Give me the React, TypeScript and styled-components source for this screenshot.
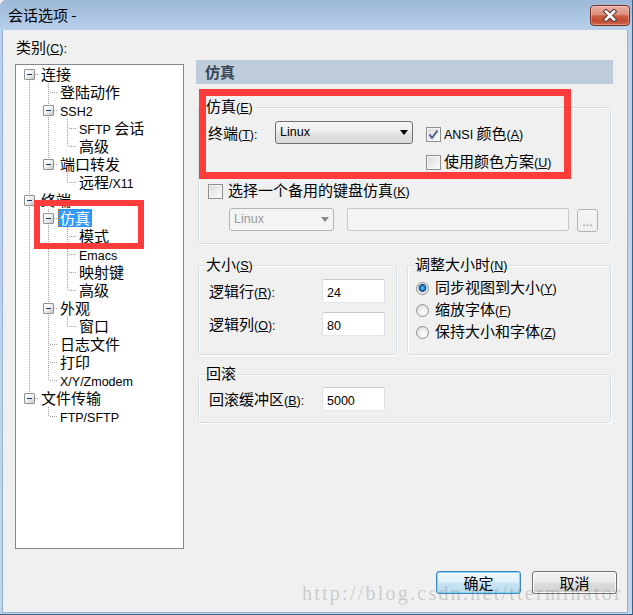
import React from "react";
import styled, { createGlobalStyle, css } from "styled-components";

const GlobalStyle = createGlobalStyle`
  html, body { margin: 0; padding: 0; background: #f0f0f0; }
  body {
    font-family: "Noto Sans CJK SC", "Noto Sans", sans-serif;
    font-size: 15px;
    color: #000;
  }
  *, *::before, *::after { box-sizing: border-box; }
`;

const Latin = styled.span`
  font-family: "Liberation Sans", Arial, sans-serif;
  font-size: 12.5px;
  u { text-decoration-thickness: 1px; text-underline-offset: 1px; }
`;

const Key: React.FC<{ k: string; colon?: boolean }> = ({ k, colon }) => (
  <Latin>
    (<u>{k}</u>){colon ? ":" : ""}
  </Latin>
);

/* ---------- window chrome ---------- */

const Window = styled.div`
  position: relative;
  width: 633px;
  height: 615px;
  display: flex;
  flex-direction: column;
  background: linear-gradient(to bottom, #9cb7d7 0px, #b9d1eb 30px, #bfd6ee 100%);
  box-shadow: inset -1px -1px 0 #3a6186;
  border-top-left-radius: 6px;
  overflow: hidden;
`;

const TitleBar = styled.div`
  flex: none;
  height: 30px;
  display: flex;
  align-items: center;
  justify-content: space-between;
  padding: 0 3px 0 8px;
`;

const TitleText = styled.div`
  line-height: 18px;
  color: #000;
`;

const CloseButton = styled.div`
  width: 40px;
  height: 21px;
  border-radius: 4px;
  border: 1px solid #7a2d22;
  background: linear-gradient(
    to bottom,
    #eab0a3 0%,
    #dc8f7c 45%,
    #c95c45 52%,
    #c24a31 80%,
    #d06a4f 100%
  );
  box-shadow: inset 0 0 0 1px rgba(255, 255, 255, 0.3);
  display: flex;
  align-items: center;
  justify-content: center;
`;

const Client = styled.div`
  flex: 1;
  margin: 0 5px 2px 2px;
  border: 1px solid #93b2d4;
  border-top: none;
  background: #f0f0f0;
  display: flex;
  flex-direction: column;
`;

const Main = styled.div`
  flex: 1;
  display: flex;
  gap: 12px;
  padding: 8px 0 0 12px;
`;

/* ---------- left: category tree ---------- */

const LeftCol = styled.div`
  width: 169px;
  display: flex;
  flex-direction: column;
`;

const CategoryLabel = styled.div`
  height: 18px;
  line-height: 18px;
  margin-bottom: 8px;
  padding-left: 1px;
`;

const TreeBox = styled.div`
  height: 485px;
  background: #fff;
  border: 1px solid #828790;
  padding: 0 0 0 4px;
`;

const TreeRow = styled.div`
  display: flex;
  height: 18px;
  line-height: 18px;
  white-space: nowrap;
`;

const dotsV = "repeating-linear-gradient(to bottom, #a0a0a0 0 1px, transparent 1px 2px)";
const dotsH = "repeating-linear-gradient(to right, #a0a0a0 0 1px, transparent 1px 2px)";

const Guide = styled.div<{ $line: boolean }>`
  flex: none;
  width: 19px;
  height: 18px;
  ${(p) =>
    p.$line &&
    css`
      background: ${dotsV} 9px 0 / 1px 18px no-repeat;
    `}
`;

const Connector = styled.div<{ $up: boolean; $down: boolean }>`
  flex: none;
  width: 19px;
  height: 18px;
  display: flex;
  align-items: flex-start;
  background: ${dotsH} 11px 9px / 8px 1px no-repeat
    ${(p) => (p.$up ? `, ${dotsV} 9px 0 / 1px 10px no-repeat` : "")}
    ${(p) => (p.$down ? `, ${dotsV} 9px 10px / 1px 8px no-repeat` : "")};
`;

const Expander = styled.div`
  width: 11px;
  height: 11px;
  margin: 4px 0 0 4px;
  border: 1px solid #919191;
  border-radius: 1px;
  background: linear-gradient(135deg, #ffffff 0%, #f2f2f2 45%, #c9c9c9 100%);
  display: flex;
  align-items: center;
  justify-content: center;
  &::before {
    content: "";
    width: 5px;
    height: 1px;
    background: #1e3a66;
  }
`;

const NodeLabel = styled.span<{ $selected?: boolean }>`
  height: 18px;
  line-height: 18px;
  padding: 0 2px;
  ${(p) =>
    p.$selected &&
    css`
      background: #3399ff;
      color: #fff;
      outline: 1px dotted #cc6600;
      outline-offset: -1px;
    `}
`;

type TreeNode = { label: React.ReactNode; children?: TreeNode[]; selected?: boolean };

const treeData: TreeNode[] = [
  {
    label: "连接",
    children: [
      { label: "登陆动作" },
      {
        label: <Latin>SSH2</Latin>,
        children: [
          {
            label: (
              <>
                <Latin>SFTP</Latin> 会话
              </>
            ),
          },
          { label: "高级" },
        ],
      },
      {
        label: "端口转发",
        children: [
          {
            label: (
              <>
                远程<Latin>/X11</Latin>
              </>
            ),
          },
        ],
      },
    ],
  },
  {
    label: "终端",
    children: [
      {
        label: "仿真",
        selected: true,
        children: [
          { label: "模式" },
          { label: <Latin>Emacs</Latin> },
          { label: "映射键" },
          { label: "高级" },
        ],
      },
      { label: "外观", children: [{ label: "窗口" }] },
      { label: "日志文件" },
      { label: "打印" },
      { label: <Latin>X/Y/Zmodem</Latin> },
    ],
  },
  { label: "文件传输", children: [{ label: <Latin>FTP/SFTP</Latin> }] },
];

type FlatRow = {
  node: TreeNode;
  guides: boolean[];
  hasNext: boolean;
  first: boolean;
};

function flatten(nodes: TreeNode[], depth: number, guides: boolean[], out: FlatRow[]) {
  nodes.forEach((n, i) => {
    const hasNext = i < nodes.length - 1;
    out.push({ node: n, guides, hasNext, first: depth === 0 && i === 0 });
    if (n.children) flatten(n.children, depth + 1, [...guides, hasNext], out);
  });
  return out;
}

const rows = flatten(treeData, 0, [], []);

const CategoryTree: React.FC = () => (
  <TreeBox>
    {rows.map((r, idx) => (
      <TreeRow key={idx}>
        {r.guides.map((g, gi) => (
          <Guide key={gi} $line={g} />
        ))}
        <Connector $up={!r.first} $down={r.hasNext}>
          {r.node.children && <Expander />}
        </Connector>
        <NodeLabel $selected={r.node.selected}>{r.node.label}</NodeLabel>
      </TreeRow>
    ))}
  </TreeBox>
);

/* ---------- right: options panel ---------- */

const RightCol = styled.div`
  width: 417px;
  padding-top: 22px;
  display: flex;
  flex-direction: column;
`;

const PanelHeader = styled.div`
  height: 24px;
  line-height: 24px;
  background: #bfcddb;
  color: #3a4653;
  font-weight: bold;
  padding-left: 9px;
`;

const Group = styled.div`
  position: relative;
  border: 1px solid #d5dfe5;
  border-radius: 3px;
  box-shadow: inset 1px 1px 0 #ffffff, 1px 1px 0 #ffffff;
`;

const Legend = styled.span`
  position: absolute;
  top: -11px;
  left: 6px;
  height: 18px;
  padding: 0 1px;
  background: #f0f0f0;
  line-height: 18px;
  white-space: nowrap;
`;

const EmuGroup = styled(Group)`
  margin: 23px 2px 0;
  padding: 13px 9px 11px;
`;

const TermRow = styled.div`
  display: flex;
  align-items: flex-start;
`;

const FieldLabel = styled.div<{ $w: number; $h: number }>`
  flex: none;
  width: ${(p) => p.$w}px;
  height: ${(p) => p.$h}px;
  line-height: ${(p) => p.$h}px;
  white-space: nowrap;
  overflow: visible;
`;

const Combo = styled.div<{ $w: number; $disabled?: boolean }>`
  flex: none;
  width: ${(p) => p.$w}px;
  height: 23px;
  border: 1px solid ${(p) => (p.$disabled ? "#b2b6b9" : "#707070")};
  border-radius: 3px;
  background: ${(p) =>
    p.$disabled
      ? "#f4f4f4"
      : "linear-gradient(to bottom, #f6f6f6 0%, #ededed 48%, #e2e2e2 52%, #d9d9d9 100%)"};
  color: ${(p) => (p.$disabled ? "#9a9a9a" : "#000")};
  display: flex;
  align-items: center;
  justify-content: space-between;
  padding: 0 4px;
  line-height: 21px;
`;

const Arrow = styled.span<{ $disabled?: boolean }>`
  width: 0;
  height: 0;
  border-left: 4.5px solid transparent;
  border-right: 4.5px solid transparent;
  border-top: 5px solid ${(p) => (p.$disabled ? "#8a8a8a" : "#000")};
`;

const CheckCol = styled.div`
  margin: 4px 0 0 13px;
  display: flex;
  flex-direction: column;
  gap: 10px;
`;

const CheckRow = styled.div<{ $gap: number }>`
  display: flex;
  align-items: center;
  height: 18px;
  line-height: 18px;
  gap: ${(p) => p.$gap}px;
  white-space: nowrap;
`;

const CheckBox = styled.span`
  flex: none;
  width: 15px;
  height: 15px;
  border: 1px solid #8e8f8f;
  background: linear-gradient(135deg, #d9d9d9 0%, #eeeeee 55%, #fbfbfb 100%);
  box-shadow: inset 0 0 0 1px #f6f6f6;
  display: flex;
  align-items: center;
  justify-content: center;
`;

const AltKeyRow = styled.div`
  margin-top: 11px;
`;

const AltRow = styled.div`
  margin-top: 8px;
  padding-left: 21px;
  display: flex;
  align-items: flex-start;
`;

const DisabledField = styled.div`
  flex: none;
  width: 222px;
  height: 23px;
  margin-left: 13px;
  border: 1px solid #c5c9cd;
  border-radius: 2px;
  background: #f4f4f4;
`;

const BrowseButton = styled.div`
  flex: none;
  width: 21px;
  height: 23px;
  margin: 1px 0 0 8px;
  border: 1px solid #b4b4b4;
  border-radius: 3px;
  background: linear-gradient(to bottom, #f7f7f7, #ededed);
  color: #8a8a8a;
  display: flex;
  align-items: center;
  justify-content: center;
  line-height: 21px;
  padding-top: 4px;
`;

const SizeRow = styled.div`
  display: flex;
  gap: 10px;
  margin: 21px 2px 0;
`;

const SizeGroup = styled(Group)`
  width: 199px;
  padding: 13px 10px 14px;
  display: flex;
  flex-direction: column;
  gap: 9px;
`;

const ResizeGroup = styled(Group)`
  flex: 1;
  padding: 12px 8px;
  display: flex;
  flex-direction: column;
  gap: 2px;
`;

const ScrollGroup = styled(Group)`
  margin: 19px 2px 0;
  padding: 12px 10px 11px;
`;

const InputRow = styled.div`
  display: flex;
  align-items: center;
  height: 24px;
`;

const TextBox = styled.div`
  flex: none;
  width: 63px;
  height: 24px;
  background: #fff;
  border: 1px solid;
  border-color: #c4c8ce #dce0e5 #e3e7eb #dce0e5;
  border-radius: 2px;
  padding-left: 4px;
  line-height: 22px;
`;

const RadioRow = styled.div`
  display: flex;
  align-items: center;
  height: 20px;
  line-height: 20px;
  gap: 6px;
  white-space: nowrap;
`;

const Radio = styled.span<{ $on?: boolean }>`
  flex: none;
  width: 13px;
  height: 13px;
  border-radius: 50%;
  border: 1px solid #8e8f8f;
  background: ${(p) =>
    p.$on
      ? "radial-gradient(circle at 50% 45%, #a8e0ff 0, #2b8ad6 1.6px, #0e4f90 3.6px, #e6e6e6 4.3px, #fbfbfb 100%)"
      : "radial-gradient(circle at 62% 66%, #ffffff 0, #f1f1f1 40%, #d2d2d2 100%)"};
`;

/* ---------- bottom buttons ---------- */

const ButtonBar = styled.div`
  display: flex;
  justify-content: flex-end;
  gap: 11px;
  padding: 0 10px 18px 0;
`;

const DialogButton = styled.button<{ $primary?: boolean }>`
  width: 85px;
  height: 23px;
  padding: 0;
  font: inherit;
  font-size: 15px;
  line-height: 21px;
  color: #000;
  border-radius: 3px;
  border: 1px solid ${(p) => (p.$primary ? "#3d86bd" : "#707070")};
  background: ${(p) =>
    p.$primary
      ? "linear-gradient(to bottom, #f0f8fd 0%, #dff0fa 48%, #c9e4f3 52%, #bcdcee 100%)"
      : "linear-gradient(to bottom, #f2f2f2 0%, #ebebeb 48%, #dddddd 52%, #cfcfcf 100%)"};
  box-shadow: inset 0 0 0 1px ${(p) => (p.$primary ? "#86d4f4" : "#fbfbfb")};
`;

/* ---------- overlays ---------- */

const Annotation = styled.div<{ $x: number; $y: number; $w: number; $h: number; $b: number }>`
  position: absolute;
  left: ${(p) => p.$x}px;
  top: ${(p) => p.$y}px;
  width: ${(p) => p.$w}px;
  height: ${(p) => p.$h}px;
  border: ${(p) => p.$b}px solid #ff3c3c;
  pointer-events: none;
`;

const Watermark = styled.div`
  position: absolute;
  left: 302px;
  top: 583px;
  font-family: "Liberation Serif", "Times New Roman", serif;
  font-size: 20px;
  line-height: 20px;
  letter-spacing: 2.25px;
  color: rgba(120, 120, 120, 0.32);
  white-space: nowrap;
  pointer-events: none;
`;

const CloseIcon = () => (
  <svg width="16" height="13" viewBox="0 0 16 13">
    <path d="M4 2.5 L12 10.5 M12 2.5 L4 10.5" stroke="#5a3a34" strokeWidth="4.6" strokeLinecap="square" />
    <path d="M4 2.5 L12 10.5 M12 2.5 L4 10.5" stroke="#ffffff" strokeWidth="2.6" strokeLinecap="square" />
  </svg>
);

const CheckMark = () => (
  <svg width="13" height="13" viewBox="0 0 13 13">
    <path d="M2.5 6.5 L5 10 L10.5 2.5" fill="none" stroke="#4b5f8c" strokeWidth="2" strokeLinejoin="round" />
  </svg>
);

export default function App() {
  return (
    <>
      <GlobalStyle />
      <Window>
        <TitleBar>
          <TitleText>会话选项 -</TitleText>
          <CloseButton>
            <CloseIcon />
          </CloseButton>
        </TitleBar>
        <Client>
          <Main>
            <LeftCol>
              <CategoryLabel>
                类别<Key k="C" colon />
              </CategoryLabel>
              <CategoryTree />
            </LeftCol>
            <RightCol>
              <PanelHeader>仿真</PanelHeader>

              <EmuGroup>
                <Legend>
                  仿真<Key k="E" />
                </Legend>
                <TermRow>
                  <FieldLabel $w={67} $h={23}>
                    终端<Key k="T" colon />
                  </FieldLabel>
                  <Combo $w={138}>
                    <Latin>Linux</Latin>
                    <Arrow />
                  </Combo>
                  <CheckCol>
                    <CheckRow $gap={3}>
                      <CheckBox>
                        <CheckMark />
                      </CheckBox>
                      <span>
                        <Latin>ANSI</Latin> 颜色<Key k="A" />
                      </span>
                    </CheckRow>
                    <CheckRow $gap={3}>
                      <CheckBox />
                      <span>
                        使用颜色方案<Key k="U" />
                      </span>
                    </CheckRow>
                  </CheckCol>
                </TermRow>
                <AltKeyRow>
                  <CheckRow $gap={5}>
                    <CheckBox />
                    <span>
                      选择一个备用的键盘仿真<Key k="K" />
                    </span>
                  </CheckRow>
                </AltKeyRow>
                <AltRow>
                  <Combo $w={105} $disabled>
                    <Latin>Linux</Latin>
                    <Arrow $disabled />
                  </Combo>
                  <DisabledField />
                  <BrowseButton>
                    <Latin>...</Latin>
                  </BrowseButton>
                </AltRow>
              </EmuGroup>

              <SizeRow>
                <SizeGroup>
                  <Legend>
                    大小<Key k="S" />
                  </Legend>
                  <InputRow>
                    <FieldLabel $w={113} $h={24}>
                      逻辑行<Key k="R" colon />
                    </FieldLabel>
                    <TextBox>
                      <Latin>24</Latin>
                    </TextBox>
                  </InputRow>
                  <InputRow>
                    <FieldLabel $w={113} $h={24}>
                      逻辑列<Key k="O" colon />
                    </FieldLabel>
                    <TextBox>
                      <Latin>80</Latin>
                    </TextBox>
                  </InputRow>
                </SizeGroup>
                <ResizeGroup>
                  <Legend>
                    调整大小时<Key k="N" />
                  </Legend>
                  <RadioRow>
                    <Radio $on />
                    <span>
                      同步视图到大小<Key k="Y" />
                    </span>
                  </RadioRow>
                  <RadioRow>
                    <Radio />
                    <span>
                      缩放字体<Key k="F" />
                    </span>
                  </RadioRow>
                  <RadioRow>
                    <Radio />
                    <span>
                      保持大小和字体<Key k="Z" />
                    </span>
                  </RadioRow>
                </ResizeGroup>
              </SizeRow>

              <ScrollGroup>
                <Legend>回滚</Legend>
                <InputRow>
                  <FieldLabel $w={113} $h={24}>
                    回滚缓冲区<Key k="B" colon />
                  </FieldLabel>
                  <TextBox>
                    <Latin>5000</Latin>
                  </TextBox>
                </InputRow>
              </ScrollGroup>
            </RightCol>
          </Main>
          <ButtonBar>
            <DialogButton $primary>确定</DialogButton>
            <DialogButton>取消</DialogButton>
          </ButtonBar>
        </Client>
        <Annotation $x={34} $y={200} $w={110} $h={49} $b={6} />
        <Annotation $x={199} $y={89} $w={372} $h={90} $b={7} />
        <Watermark>http://blog.csdn.net/tterminator</Watermark>
      </Window>
    </>
  );
}
